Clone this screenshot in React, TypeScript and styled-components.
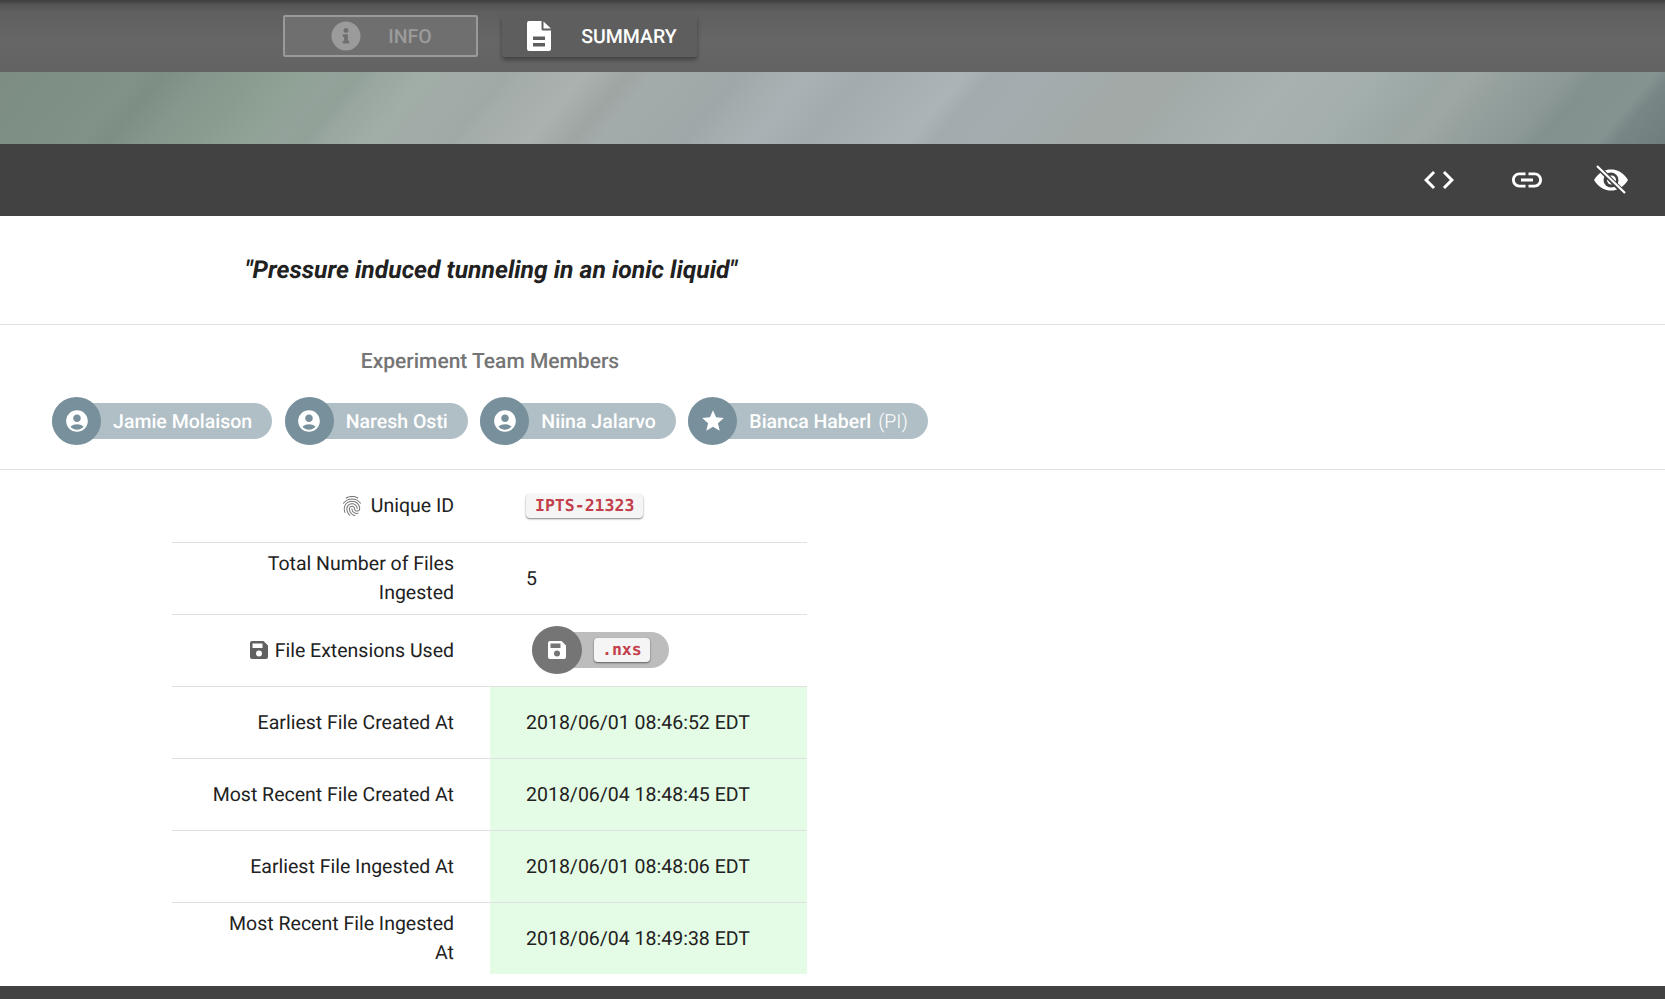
import React from 'react'
import styled, { createGlobalStyle } from 'styled-components'
import { FaInfoCircle } from 'react-icons/fa'
import { MdAccountCircle, MdCode, MdFingerprint, MdLink, MdStar } from 'react-icons/md'

const GlobalStyle = createGlobalStyle`
  html, body {
    margin: 0;
    padding: 0;
    background: #fff;
    font-family: Roboto, "Liberation Sans", sans-serif;
    text-rendering: geometricPrecision;
    overflow: hidden;
  }
`

const Page = styled.div`
  width: 1665px;
  height: 999px;
  overflow: hidden;
  display: flex;
  flex-direction: column;
`

const TabBar = styled.div`
  height: 72px;
  flex: none;
  background: linear-gradient(#3f3f3f 0, #555 5px, #5f5f5f 12px, #666 40px, #636363 72px);
`

const Column = styled.div`
  width: 980px;
`

const Tabs = styled(Column)`
  height: 100%;
  display: flex;
  justify-content: center;
  align-items: center;
  gap: 24px;
`

const Tab = styled.div<{ $active?: boolean }>`
  width: 195px;
  height: 42px;
  box-sizing: border-box;
  display: flex;
  align-items: center;
  justify-content: center;
  gap: 27px;
  padding-left: 2px;
  border-radius: 2px;
  font-size: 19.5px;
  font-weight: 500;
  color: ${p => (p.$active ? '#fff' : '#9b9b9b')};
  background: ${p => (p.$active ? '#5e5e5e' : '#6f6f6f')};
  border: ${p => (p.$active ? 'none' : '2px solid #9a9a9a')};
  box-shadow: ${p => (p.$active ? '0 3px 4px rgba(0,0,0,.35)' : 'none')};
  svg {
    flex: none;
    width: 30px;
    height: 30px;
  }
`

const Banner = styled.div`
  height: 72px;
  flex: none;
  background:
    linear-gradient(130deg, transparent 8%, rgba(105,120,112,.22) 9.5%, transparent 12%, rgba(150,170,150,.16) 18%, transparent 19%, rgba(125,145,130,.2) 21%, transparent 22%, rgba(190,200,195,.12) 25%, transparent 26.5%, rgba(130,140,135,.14) 29.5%, transparent 30.5%, rgba(205,210,210,.2) 34%, rgba(140,145,140,.2) 36.5%, transparent 38%, rgba(135,150,145,.18) 43%, transparent 44.5%, rgba(190,200,205,.16) 47%, rgba(150,155,165,.18) 50%, transparent 52%, rgba(205,210,215,.18) 56%, rgba(150,155,160,.14) 57.5%, transparent 60%, rgba(160,160,150,.14) 66%, transparent 69%, rgba(195,205,205,.12) 75%, transparent 79%, rgba(130,145,145,.16) 84%, transparent 85.5%, rgba(170,180,180,.16) 91%, transparent 92.5%, rgba(170,185,180,.2) 96%, transparent 97%),
    linear-gradient(130deg, #7d8d84 0, #7f9086 6%, #899b8f 15%, #95a49c 20%, #a5aeab 29%, #a2aaa8 34%, #a5aeb1 50%, #a3adb0 60%, #a2aaa8 68%, #a4afae 80%, #9fa9a5 85%, #869391 91%, #7b8a88 96%, #6f7e7c 100%);
`

const ActionBar = styled.div`
  height: 72px;
  flex: none;
  background: #424242;
  display: flex;
  align-items: center;
  justify-content: flex-end;
  padding-right: 36px;
  gap: 49px;
  color: #fff;
`

const ActionIcon = styled.span`
  display: flex;
  justify-content: center;
  font-size: 36px;
  svg {
    flex: none;
  }
  &:first-child {
    margin-right: 3px;
  }
  &:last-child {
    margin-left: -1px;
  }
`

const TitleSection = styled.section`
  height: 109px;
  flex: none;
  box-sizing: border-box;
  border-bottom: 1px solid #e0e0e0;
  padding-top: 40px;
`

const Title = styled.h1`
  margin: 0;
  padding-left: 2px;
  font-size: 24.7px;
  line-height: 29px;
  font-style: italic;
  font-weight: 700;
  color: #212121;
  text-align: center;
`

const TeamSection = styled.section`
  height: 145px;
  flex: none;
  box-sizing: border-box;
  border-bottom: 1px solid #e0e0e0;
  padding-top: 25px;
`

const TeamHeading = styled.h2`
  margin: 0 0 23px;
  font-size: 21px;
  line-height: 24px;
  font-weight: 500;
  color: #757575;
  text-align: center;
`

const ChipRow = styled.div`
  display: flex;
  justify-content: center;
  gap: 12.5px;
`

const Chip = styled.div`
  height: 36px;
  margin: 6px 0;
  display: flex;
  align-items: center;
  border-radius: 18px;
  background: #b0bec5;
  color: #fff;
  font-size: 19.5px;
  font-weight: 500;
  padding-right: 20px;
`

const ChipAvatar = styled.span`
  width: 49px;
  height: 48px;
  border-radius: 50%;
  background: #78909c;
  display: flex;
  align-items: center;
  justify-content: center;
  font-size: 26px;
  margin-right: 12px;
`

const Role = styled.span`
  font-weight: 300;
  margin-left: 7px;
`

const Table = styled.div`
  width: 635px;
  margin-left: 172px;
`

const Row = styled.div`
  display: grid;
  grid-template-columns: 318px 317px;
  height: 72px;
  box-sizing: border-box;
  border-top: 1px solid #e0e0e0;
  font-size: 19.5px;
  color: #212121;
  &:first-child {
    border-top: none;
  }
`

const Label = styled.div`
  display: flex;
  align-items: center;
  justify-content: flex-end;
  gap: 7px;
  padding: 0 36px 1px 37px;
  text-align: right;
  line-height: 29px;
  svg {
    flex: none;
  }
`

const Value = styled.div<{ $date?: boolean }>`
  display: flex;
  align-items: center;
  padding-left: 36px;
  background: ${p => (p.$date ? '#e4fbe5' : 'transparent')};
`

const Code = styled.code`
  font-family: "DejaVu Sans Mono", "Liberation Mono", monospace;
  font-size: 16.5px;
  line-height: 24px;
  font-weight: 700;
  color: #c23f4b;
  background: #f5f5f5;
  border-radius: 4px;
  padding: 0 9px;
  box-shadow: 0 1px 2px rgba(0,0,0,.5);
`

const ExtChip = styled.div`
  height: 36px;
  margin: -1px 0 0 6px;
  display: flex;
  align-items: center;
  border-radius: 18px;
  background: #bdbdbd;
  padding-right: 19px;
`

const ExtAvatar = styled(ChipAvatar)`
  width: 50px;
  background: #757575;
  color: #fff;
`

const SmallCode = styled(Code)`
  padding: 0 8px;
`

const SaveLabelIcon = styled.span`
  display: flex;
  color: #616161;
`

const Footer = styled.div`
  margin-top: 12px;
  flex: 1;
  background: #424242;
`

const SummaryIcon = () => (
  <svg viewBox="0 0 30 30" fill="#fff">
    <path
      fillRule="evenodd"
      d="M5 0h12.5v8a1.5 1.5 0 0 0 1.5 1.5h8V28a2 2 0 0 1-2 2H5a2 2 0 0 1-2-2V2a2 2 0 0 1 2-2zM9 15.5v3.5h12v-3.5H9zm0 6.5v3.5h12V22H9z"
    />
    <path d="M19.5 0.5L27 7.5h-7.5z" />
  </svg>
)

const SaveIcon = () => (
  <svg width="18" height="18" viewBox="0 0 18 18" fill="currentColor">
    <path
      fillRule="evenodd"
      d="M2 0h11.5L18 4.5V16a2 2 0 0 1-2 2H2a2 2 0 0 1-2-2V2a2 2 0 0 1 2-2zM2.5 2.5v4.5h10V2.500h-10zM9 9.500a3 3 0 1 0 0 6 3 3 0 0 0 0-6z"
    />
  </svg>
)

const HiddenIcon = () => (
  <svg width="36" height="30" viewBox="0 0 36 30" fill="none">
    <path d="M1 15C6 7 12 4.500 18 4.500S30 7 35 15c-5 8-11 10.500-17 10.500S6 23 1 15z" fill="#fff" />
    <circle cx="18" cy="15" r="7.500" fill="#424242" />
    <circle cx="18.500" cy="15" r="4.500" fill="#fff" />
    <path d="M5 2l26 26" stroke="#424242" strokeWidth="5" />
    <path d="M4 1l28 27" stroke="#fff" strokeWidth="2.200" />
  </svg>
)

const members = [
  { name: 'Jamie Molaison' },
  { name: 'Naresh Osti' },
  { name: 'Niina Jalarvo' },
  { name: 'Bianca Haberl', role: '(PI)' },
]

const dates = [
  ['Earliest File Created At', '2018/06/01 08:46:52 EDT'],
  ['Most Recent File Created At', '2018/06/04 18:48:45 EDT'],
  ['Earliest File Ingested At', '2018/06/01 08:48:06 EDT'],
  ['Most Recent File Ingested At', '2018/06/04 18:49:38 EDT'],
]

export default function App() {
  return (
    <Page>
      <GlobalStyle />
      <TabBar>
        <Tabs>
          <Tab>
            <FaInfoCircle />
            INFO
          </Tab>
          <Tab $active>
            <SummaryIcon />
            SUMMARY
          </Tab>
        </Tabs>
      </TabBar>
      <Banner />
      <ActionBar>
        <ActionIcon><MdCode /></ActionIcon>
        <ActionIcon><MdLink /></ActionIcon>
        <ActionIcon><HiddenIcon /></ActionIcon>
      </ActionBar>
      <TitleSection>
        <Column>
          <Title>"Pressure induced tunneling in an ionic liquid"</Title>
        </Column>
      </TitleSection>
      <TeamSection>
        <Column>
          <TeamHeading>Experiment Team Members</TeamHeading>
          <ChipRow>
            {members.map(m => (
              <Chip key={m.name}>
                <ChipAvatar>{m.role ? <MdStar /> : <MdAccountCircle />}</ChipAvatar>
                {m.name}
                {m.role && <Role>{m.role}</Role>}
              </Chip>
            ))}
          </ChipRow>
        </Column>
      </TeamSection>
      <Table>
        <Row>
          <Label><MdFingerprint size={24} color="#757575" />Unique ID</Label>
          <Value><Code>IPTS-21323</Code></Value>
        </Row>
        <Row>
          <Label>Total Number of Files Ingested</Label>
          <Value>5</Value>
        </Row>
        <Row>
          <Label><SaveLabelIcon><SaveIcon /></SaveLabelIcon>File Extensions Used</Label>
          <Value>
            <ExtChip>
              <ExtAvatar><SaveIcon /></ExtAvatar>
              <SmallCode>.nxs</SmallCode>
            </ExtChip>
          </Value>
        </Row>
        {dates.map(([label, value]) => (
          <Row key={label}>
            <Label>{label}</Label>
            <Value $date>{value}</Value>
          </Row>
        ))}
      </Table>
      <Footer />
    </Page>
  )
}
